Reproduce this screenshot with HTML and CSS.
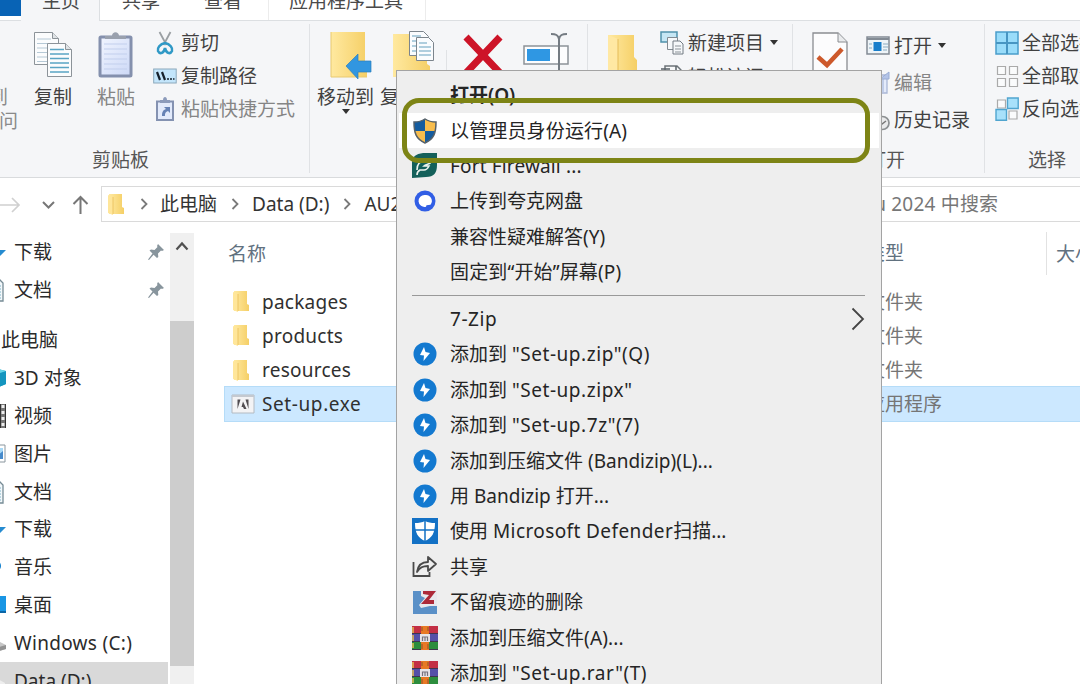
FILE: index.html
```html
<!DOCTYPE html>
<html lang="zh-CN">
<head>
<meta charset="utf-8">
<title>文件资源管理器</title>
<link rel="stylesheet" href="styles.css">
</head>
<body>
<svg class="defs" width="0" height="0">
  <defs>
    <linearGradient id="fold" x1="0" x2="1"><stop offset="0" stop-color="#ffe9a0"/><stop offset="1" stop-color="#f5cf66"/></linearGradient>
    <linearGradient id="clip" x1="0" x2="1" y2="1"><stop offset="0" stop-color="#f1f5ff"/><stop offset="1" stop-color="#ccd8f6"/></linearGradient>
    <symbol id="folder" viewBox="0 0 16 21"><path d="M1 0h13v13l2 1v6H1z" fill="url(#fold)"/><path d="M0 1l5 2v18l-5-2z" fill="#ffe69a"/><path d="M5 3v17" stroke="#e8bd56" stroke-width=".8"/></symbol>
    <symbol id="bandi" viewBox="0 0 24 24"><circle cx="12" cy="12" r="11.5" fill="#1379d0"/><path d="M11 5l-4 8 4 .5-.5 5.500 6.500-8-4.500-1z" fill="#fff"/></symbol>
    <symbol id="rar" viewBox="0 0 26 24"><path d="M0 0h26v8H0z" fill="#c32f45"/><path d="M0 8h26v8H0z" fill="#5550a8"/><path d="M0 16h26v8H0z" fill="#2c8d3d"/><path d="M0 7.5h26M0 15.5h26M0 23.5h26" stroke="#40354d" stroke-width="1"/><path d="M1 1v6M1 9v6M1 17v5" stroke="#e8bd51" stroke-width="1.5"/><path d="M9 0h8v24H9z" fill="#e87924"/><path d="M10 1v4m6-4v4m-6 13v5m6-5v5" stroke="#8b532b" stroke-width="1"/><path d="M8 8h10v8H8z" fill="#e7e4e8"/><path d="M10.500 15v-4h5v4M13 11v4" fill="none" stroke="#77727c" stroke-width="1.200"/></symbol>
    <symbol id="pin" viewBox="0 0 16 16"><path d="M10 0l6 6-2 1-1-.5-3 3 .3 3.5L9 14 5.600 10.800 1 16l-1-.5L4.500 9.500 1.500 6.500 3 5.500l3.500.5 3-3L9 2z" fill="#88959d"/></symbol>
    <symbol id="chev" viewBox="0 0 8 12"><path d="M1.500 1l5 5-5 5" fill="none" stroke="#7a7a7a" stroke-width="1.8"/></symbol>
    <symbol id="doc" viewBox="0 0 24 24"><path d="M1 1h18l4 4v18H1z" fill="#f3f8fb" stroke="#768b95" stroke-width="1.3"/><path d="M5 8h16M5 11h16M5 14h16M5 17h16M5 20h16" stroke="#7fb4c8"/></symbol>
    <symbol id="down" viewBox="0 0 24 24"><path d="M8 1h9v9h7L12 22 0 10h8z" fill="#268bd0"/></symbol>
  </defs>
</svg>
<div class="explorer">
  <nav class="tabs">
    <span class="tab file"></span>
    <span class="tab active">主页</span>
    <span class="tab share">共享</span>
    <span class="tab view">查看</span>
    <span class="tab tools">应用程序工具</span>
  </nav>

  <section class="ribbon">
    <div class="group clipboard">
      <div class="controls">
        <div class="pin-label"><span>到</span><span>问</span></div>
        <div class="big copy">
          <svg width="40" height="48" viewBox="0 0 40 48"><g fill="#fbfcfd" stroke="#8c9399"><path d="M1.500 1.500h18l6 6v26h-24z"/><path d="M19.500 1.500v6h6" fill="#dfe3e6"/></g><path d="M4 8h14M4 12.500h18M4 17h12M4 21.500h10M4 26h10M4 30.500h10" stroke="#b6c9d6"/><g fill="#fbfcfd" stroke="#8c9399"><path d="M14.500 12.500h18l6 6v27h-24z"/><path d="M32.500 12.500v6h6" fill="#dfe3e6"/></g><path d="M17 18.500h14M17 23h19M17 27.500h19M17 32h19M17 36.500h19M17 41h19" stroke="#5aa4c4" stroke-width="1.4"/></svg>
          <span>复制</span>
        </div>
        <div class="big paste">
          <svg width="36" height="48" viewBox="0 0 36 48"><rect x="2" y="6" width="31" height="39" rx="1" fill="url(#clip)" stroke="#8490ad" stroke-width="3"/><path d="M6 13h23M6 18h23M6 23h23M6 28h23M6 33h23M6 38h23" stroke="#c2cfed"/><path d="M7 8V5h7c0-5 7-5 7 0h7v3z" fill="#9aa1ae"/></svg>
          <span>粘贴</span>
        </div>
        <div class="stack">
          <div class="cmd"><svg width="24" height="26" viewBox="0 0 24 26"><path d="M6.500 2l7 13M17.500 2l-7 13" stroke="#9a9fa3" stroke-width="1.800"/><path d="M12 13c-5 1-8 5-7 8 2 4 6 2 7-3 1 5 5 7 7 3 1-3-2-7-7-8z" fill="none" stroke="#3099c6" stroke-width="2.600"/></svg><span>剪切</span></div>
          <div class="cmd"><svg width="24" height="16" viewBox="0 0 24 16"><rect x=".7" y="1" width="22.500" height="14" fill="#c3e5fb" stroke="#8ca8bb"/><path d="M4 4l3 8M9 4l3 8" stroke="#16212c" stroke-width="2.200"/><path d="M14 11h2m1 0h2m1 0h1.500" stroke="#16212c" stroke-width="1.600"/></svg><span>复制路径</span></div>
          <div class="cmd muted"><svg width="24" height="26" viewBox="0 0 24 26"><rect x="4" y="5.500" width="16" height="18.500" fill="#e2eafb" stroke="#8492b1" stroke-width="2"/><path d="M7 7V4h3c0-4 4-4 4 0h3v3z" fill="#8c9bbb"/><path d="M9 20c0-4 1-6 4-7l-2-2h6v6l-2-2c-3 1-3 3-3 5z" fill="#6682b5"/></svg><span>粘贴快捷方式</span></div>
        </div>
      </div>
      <div class="caption">剪贴板</div>
    </div>

    <div class="group organize">
      <div class="big move">
        <svg width="42" height="48" viewBox="0 0 42 48"><path d="M1 1h34v34l2 2v9H1z" fill="url(#fold)"/><path d="M1 1v45h36" fill="none" stroke="#e8c971"/><path d="M16 35l12-12v7h13v11H28v7z" fill="#3196e0" stroke="#2c80bb" stroke-width=".7"/></svg>
        <span>移动到</span><i class="caret"></i>
      </div>
      <div class="big copyto">
        <svg width="44" height="48" viewBox="0 0 44 48"><path d="M1 3h34v30l3 2v11H1z" fill="url(#fold)"/><g fill="#fafcfe" stroke="#7c858d"><path d="M17.500.5h14l5 5v19h-19z"/><path d="M24.500 6.500h12l5 5v18h-17z"/></g><path d="M20 5h9M20 10h4M20 15h4M20 20h4M27 12h8M27 16h12M27 20h12M27 24h12" stroke="#64a0be"/></svg>
        <span>复制到</span>
      </div>
      <i class="rule"></i>
      <svg class="delete" width="40" height="40" viewBox="0 0 40 40"><path d="M3 4l34 36M37 4L3 40" stroke="#cd1428" stroke-width="7"/></svg>
      <svg class="rename" width="48" height="40" viewBox="0 0 48 40"><rect x="1" y="13" width="44" height="18" fill="#fdfdfe" stroke="#8c9298" stroke-width="1.500"/><path d="M4 16h23v12H4z" fill="#2f97e3"/><path d="M28 1c5 0 7 1 8 5 1-4 3-5 8-5M36 5v35" fill="none" stroke="#747b82" stroke-width="2"/></svg>
    </div>

    <div class="group create">
      <svg class="newfolder" width="30" height="42" viewBox="0 0 30 42"><path d="M0 1h26v22l3 3v16H0z" fill="url(#fold)"/><path d="M0 1l10 4v37H0z" fill="#ffe8a3"/><path d="M10 5v37" stroke="#e5bc59"/></svg>
      <div class="stack">
        <div class="cmd"><svg width="24" height="25" viewBox="0 0 24 25"><path d="M1 2h16v10H1z" fill="#c5e6f4" stroke="#4f91aa" stroke-width="1.500"/><path d="M7.500 7.500h10v12h-10z" fill="#f6f8fa" stroke="#828a91"/><path d="M13 11h7l3 3v10H13z" fill="#f6f8fa" stroke="#737b82"/><path d="M15 16h6m-6 3h6m-6 3h6" stroke="#8b9298"/></svg><span>新建项目</span><i class="caret"></i></div>
        <div class="cmd second"><svg width="24" height="25" viewBox="0 0 24 25"><path d="M5 2h12l4 4v15H5z" fill="#f7f8f9" stroke="#6c7378" stroke-width="1.500"/><path d="M1 5h9M16 2v5h5" fill="none" stroke="#596168" stroke-width="1.500"/></svg><span>轻松访问</span></div>
      </div>
    </div>

    <div class="group open">
      <div class="controls">
        <svg class="properties" width="36" height="46" viewBox="0 0 36 46"><path d="M1 1h25l9 9v35H1z" fill="#fcfcfd" stroke="#8a8d91" stroke-width="1.300"/><path d="M26 1v9h9" fill="#e9ebed" stroke="#8a8d91"/><path d="M6 25l9 8 15-16" fill="none" stroke="#cd592b" stroke-width="4.500"/></svg>
        <div class="stack">
          <div class="cmd"><svg width="24" height="20" viewBox="0 0 24 20"><path d="M1 1h22v17H1z" fill="#eef4f8" stroke="#838b94" stroke-width="1.500"/><path d="M1 3h22" stroke="#838b94" stroke-width="2"/><path d="M7.500 6h8v9h-8z" fill="#187ecb"/><path d="M3 8h3m-3 4h3m11-4h5m-5 3h5m-5 3h4" stroke="#8aabc0"/></svg><span>打开</span><i class="caret"></i></div>
          <div class="cmd muted"><svg width="24" height="25" viewBox="0 0 24 25"><path d="M2 5h19v18H2z" fill="#e4ebfb" stroke="#a9b7d6" stroke-width="1.300"/><path d="M17 9v13m-3-13l9-7v7z" fill="#b3c4e8" stroke="#9aadd4"/></svg><span>编辑</span></div>
          <div class="cmd"><svg width="26" height="25" viewBox="0 0 26 25"><circle cx="17.500" cy="16" r="6.500" fill="#e9eaeb" stroke="#8c9092" stroke-width="1.700"/><path d="M14 14l3 3 4-3" fill="none" stroke="#777" stroke-width="1.500"/></svg><span>历史记录</span></div>
        </div>
      </div>
      <div class="caption">打开</div>
    </div>

    <div class="group select">
      <div class="stack">
        <div class="cmd"><svg width="24" height="24" viewBox="0 0 24 24"><path d="M1 1h22v22H1z" fill="#99dcfa" stroke="#4a9dca" stroke-width="1.500"/><path d="M12 1v22M1 12h22" stroke="#4795c2" stroke-width="2"/></svg><span>全部选择</span></div>
        <div class="cmd"><svg width="24" height="24" viewBox="0 0 24 24"><path d="M2.500 2.500h8v8h-8zM14.500 2.500h8v8h-8zM2.500 14.500h8v8h-8zM14.500 14.500h8v8h-8z" fill="#fafbfc" stroke="#aaa" stroke-width="1.200"/></svg><span>全部取消</span></div>
        <div class="cmd"><svg width="24" height="24" viewBox="0 0 24 24"><path d="M2.500 3h8v8h-8zM14 14h8v8h-8z" fill="#fafbfc" stroke="#aaa" stroke-width="1.200"/><path d="M12.500 1h10.700v10.500H12.500zM1 12.500h10.500v10.700H1z" fill="#a8e1fb" stroke="#50a5cf" stroke-width="1.400"/></svg><span>反向选择</span></div>
      </div>
      <div class="caption">选择</div>
    </div>
  </section>

  <section class="address">
    <svg class="history-nav" width="101" height="36" viewBox="0 0 101 36"><g fill="none"><path d="M0 19h18M12 12l7 7-7 7" stroke="#d0d0d0" stroke-width="1.700"/><path d="M43 16l5.500 5.500L54 16" stroke="#777" stroke-width="2"/><path d="M80.500 28V11M73.500 18l7-7 7 7" stroke="#777" stroke-width="2"/></g></svg>
    <div class="path">
      <svg width="16" height="21"><use href="#folder"/></svg>
      <svg class="sep" width="8" height="12"><use href="#chev"/></svg><span>此电脑</span>
      <svg class="sep" width="8" height="12"><use href="#chev"/></svg><span>Data (D:)</span>
      <svg class="sep" width="8" height="12"><use href="#chev"/></svg><span>AU2024</span>
    </div>
    <div class="search">Au 2024 中搜索</div>
  </section>

  <main class="body">
    <aside class="tree">
      <div class="node"><svg class="ico" width="24" height="24"><use href="#down"/></svg><span>下载</span><svg class="pin" width="16" height="16"><use href="#pin"/></svg></div>
      <div class="node"><svg class="ico short" width="24" height="24"><use href="#doc"/></svg><span>文档</span><svg class="pin" width="16" height="16"><use href="#pin"/></svg></div>
      <div class="node root"><span>此电脑</span></div>
      <div class="node"><svg class="ico" width="24" height="24" viewBox="0 0 24 24"><path d="M12 2l12 3v13l-12 5L0 18V5z" fill="#16a0c5"/><path d="M12 9l12-4v13l-12 5z" fill="#1595bf"/><path d="M12 2l12 3-12 4L0 5z" fill="#66d4e8"/></svg><span>3D 对象</span></div>
      <div class="node"><svg class="ico" width="24" height="24" viewBox="0 0 24 24"><path d="M0 0h24v24H0z" fill="#777"/><path d="M5 1h13v22H5z" fill="#b39a69"/><path d="M21 1v22" stroke="#eee" stroke-width="3" stroke-dasharray="3 3"/><path d="M18.500 0v24M23.500 0v24" stroke="#333"/></svg><span>视频</span></div>
      <div class="node"><svg class="ico" width="24" height="20" viewBox="0 0 24 20"><path d="M1 1h22v17H1z" fill="#fff" stroke="#8a969e"/><path d="M4 4h17v11H4z" fill="#a7d8f6"/><path d="M4 15l7-7 4 4 6-5v8z" fill="#468acb"/></svg><span>图片</span></div>
      <div class="node"><svg class="ico short" width="24" height="24"><use href="#doc"/></svg><span>文档</span></div>
      <div class="node"><svg class="ico" width="24" height="24"><use href="#down"/></svg><span>下载</span></div>
      <div class="node"><svg class="ico" width="24" height="24" viewBox="0 0 24 24"><path d="M13 1c1 5 6 5 6 10 0 3-2 4-3 5 1-5-1-7-3-7z" fill="#1582cf"/><circle cx="9" cy="18" r="4" fill="#1582cf"/></svg><span>音乐</span></div>
      <div class="node"><svg class="ico" width="24" height="20" viewBox="0 0 24 20"><path d="M0 1h24v17H0z" fill="#1996e4"/><path d="M0 16h24v2H0z" fill="#0b66a6"/></svg><span>桌面</span></div>
      <div class="node"><svg class="ico" width="24" height="24" viewBox="0 0 24 24"><path d="M0 12l16-2 8 4v4l-10 3H0z" fill="#c6c6c6"/><path d="M14 17l10-3v4l-10 3z" fill="#929292"/></svg><span class="drive">Windows (C:)</span></div>
      <div class="node current"><svg class="ico" width="24" height="24" viewBox="0 0 24 24"><path d="M0 12l16-2 7 4v4l-9 3H0z" fill="#eee"/></svg><span>Data (D:)</span></div>
    </aside>
    <div class="scroll">
      <svg width="24" height="26" viewBox="0 0 24 26"><path d="M6.500 16.500l5.500-6 5.500 6" fill="none" stroke="#505050" stroke-width="2.200"/></svg>
      <div class="thumb"></div>
    </div>
    <section class="files">
      <div class="head"><span class="name">名称</span><span class="type">类型</span><span class="size">大小</span></div>
      <div class="row"><svg width="16" height="21"><use href="#folder"/></svg><span class="name">packages</span><span class="type">文件夹</span></div>
      <div class="row"><svg width="16" height="21"><use href="#folder"/></svg><span class="name">products</span><span class="type">文件夹</span></div>
      <div class="row"><svg width="16" height="21"><use href="#folder"/></svg><span class="name">resources</span><span class="type">文件夹</span></div>
      <div class="row selected"><svg class="exe" width="24" height="20" viewBox="0 0 24 20"><path d="M1 1h22v18H1z" fill="#f3f3f5" stroke="#b3bac2"/><path d="M1 2h22" stroke="#c4c9d0" stroke-width="2"/><path d="M6.500 15V5.500h3zM17.500 15V5.500h-3zM12 7.500l3.500 7.500H13l-1-2h-1.500z" fill="#504c50"/></svg><span class="name">Set-up.exe</span><span class="type">应用程序</span></div>
    </section>
  </main>

  <div class="menu">
    <div class="item default"><span class="icon"></span><span>打开(O)</span></div>
    <div class="item hover"><span class="icon"><svg width="24" height="26" viewBox="0 0 24 26"><path d="M12 1c3 2 7 3 11 3 0 11-2 17-11 21C3 21 1 15 1 4c4 0 8-1 11-3z" fill="#155c9f"/><path d="M12 1c3 2 7 3 11 3l-.4 9H12zM12 13v12C5 22 2 18 1.400 13z" fill="#f8bd4d"/><path d="M12 1c3 2 7 3 11 3 0 11-2 17-11 21C3 21 1 15 1 4c4 0 8-1 11-3z" fill="none" stroke="#56616a" stroke-width="1.500"/></svg></span><span class="wide">以管理员身份运行(A)</span></div>
    <div class="item"><span class="icon"><svg width="25" height="25" viewBox="0 0 25 25"><path d="M0 25V9C1 2 6 0 14 0h11v12c0 8-3 12-11 12z" fill="#14605a"/><path d="M5 22c0-2 1-4 3-5h4c3 0 4-2 5-4h-5c2-2 6-1 8-5h-7c-5 0-8 3-8 9" fill="none" stroke="#edf3ee" stroke-width="1.600"/></svg></span><span class="wide">Fort Firewall ...</span></div>
    <div class="item"><span class="icon"><svg width="22" height="22" viewBox="0 0 22 22"><circle cx="11" cy="11" r="10.500" fill="#315ee5"/><path d="M11 5a6 6 0 1 0 1 11.800l.5-1.600 4-.5A6 6 0 0 0 11 5z" fill="#fff"/></svg></span><span>上传到夸克网盘</span></div>
    <div class="item"><span class="icon"></span><span>兼容性疑难解答(Y)</span></div>
    <div class="item"><span class="icon"></span><span class="wide">固定到“开始”屏幕(P)</span></div>
    <div class="line"></div>
    <div class="item"><span class="icon"></span><span class="setup">7-Zip</span><svg class="submenu" width="14" height="24" viewBox="0 0 14 24"><path d="M1.500 1.500L12 12 1.500 22.500" fill="none" stroke="#444" stroke-width="1.800"/></svg></div>
    <div class="item"><span class="icon"><svg width="24" height="24"><use href="#bandi"/></svg></span><span>添加到 <span class="setup">"Set-up.zip"(Q)</span></span></div>
    <div class="item"><span class="icon"><svg width="24" height="24"><use href="#bandi"/></svg></span><span>添加到 <span class="setup">"Set-up.zipx"</span></span></div>
    <div class="item"><span class="icon"><svg width="24" height="24"><use href="#bandi"/></svg></span><span>添加到 <span class="setup">"Set-up.7z"(7)</span></span></div>
    <div class="item"><span class="icon"><svg width="24" height="24"><use href="#bandi"/></svg></span><span>添加到压缩文件 (Bandizip)(L)...</span></div>
    <div class="item"><span class="icon"><svg width="24" height="24"><use href="#bandi"/></svg></span><span>用 Bandizip 打开...</span></div>
    <div class="item"><span class="icon"><svg width="26" height="26" viewBox="0 0 26 26"><path d="M0 0h26v26H0z" fill="#1371c5"/><path d="M13 3c3 1.500 6 2 10 2 0 10-3 15-10 18C6 20 3 15 3 5c4 0 7-.5 10-2z" fill="#fff"/><path d="M13 3v20M3 12h20" stroke="#1371c5" stroke-width="1.500"/></svg></span><span>使用 <span class="defender">Microsoft Defender</span>扫描...</span></div>
    <div class="item"><span class="icon"><svg width="26" height="24" viewBox="0 0 26 24"><path d="M1.500 7v14h16v-4" fill="none" stroke="#4a4a4a" stroke-width="1.800"/><path d="M5 17c1-7 5-10 11-10V2l8 7-8 7v-5c-5 0-8 1-11 6z" fill="none" stroke="#4a4a4a" stroke-width="1.800" stroke-linejoin="round"/></svg></span><span>共享</span></div>
    <div class="item"><span class="icon"><svg width="24" height="24" viewBox="0 0 24 24"><path d="M0 1h24v23H0z" fill="#5a90c7"/><path d="M8 0h16v16h-7L8 18l-2-3 6-7-4-2z" fill="#e8e8ed"/><path d="M10 1h13l-7 9h5v4H8l8-9-6-1z" fill="#ad2939"/></svg></span><span>不留痕迹的删除</span></div>
    <div class="item"><span class="icon"><svg width="26" height="24"><use href="#rar"/></svg></span><span class="wide">添加到压缩文件(A)...</span></div>
    <div class="item"><span class="icon"><svg width="26" height="24"><use href="#rar"/></svg></span><span>添加到 <span class="setup">"Set-up.rar"(T)</span></span></div>
  </div>
  <div class="callout"></div>
</div>
</body>
</html>
```
FILE: styles.css
```css
* { box-sizing: border-box; }
body { margin: 0; }
svg { display: block; flex: none; }
.defs { position: absolute; }

.explorer {
  position: relative;
  width: 1080px;
  height: 684px;
  overflow: hidden;
  background: #fff;
  color: #303030;
  font: 19px/24px "Noto Sans", "Noto Sans CJK SC", sans-serif;
  white-space: nowrap;
}

/* Tabs */
.tabs { display: flex; height: 21px; border-bottom: 1px solid #dcdfe2; }
.tab { height: 32px; margin-top: -12px; line-height: 26px; color: #4a4a4a; }
.file { width: 21px; height: 28px; background: #0863b5; }
.active { width: 79px; height: 33px; padding-left: 21px; background: #f5f6f8; border-right: 1px solid #dcdfe2; }
.share { padding-left: 22px; width: 104px; }
.view { width: 65px; border-right: 1px solid #ececec; }
.tools { width: 157px; padding-left: 20px; border-right: 1px solid #ececec; }

/* Ribbon */
.ribbon { display: flex; height: 157px; background: #f5f6f8; border-bottom: 1px solid #d9dbdd; padding: 3px 0 4px; color: #414141; }
.group { flex: none; border-right: 1px solid #e0e2e5; }
.clipboard { width: 310px; }
.organize { display: flex; width: 278px; }
.create { display: flex; width: 205px; padding-left: 20px; }
.open { width: 192px; }
.select { width: 95px; border: 0; padding-left: 10px; }
.controls { display: flex; height: 124px; }
.caption { color: #555; height: 24px; }
.clipboard .caption { padding-left: 92px; }
.open .caption { padding-left: 74px; }
.select .caption { padding-left: 33px; }
.pin-label { display: flex; flex-direction: column; align-items: flex-end; width: 18px; padding-top: 61px; margin-right: 16px; color: #8a8a8a; }
.pin-label span:first-child { margin-right: 10px; }
.big { display: flex; flex-direction: column; align-items: center; padding-top: 7px; }
.big span { margin-top: 6px; }
.caret { width: 0; height: 0; border: 4px solid transparent; border-top: 5px solid #333; border-bottom: 0; }
.copy { width: 38px; }
.paste { width: 38px; margin-left: 25px; color: #858585; }
.move { width: 57px; margin-left: 7px; }
.move svg { margin-left: 11px; }
.copyto { width: 57px; margin-left: 6px; }
.copyto svg { margin-left: 10px; }
.rule { width: 1px; height: 48px; margin: 26px 16px 0 9px; background: #e0e2e5; }
.delete { margin-top: 9px; }
.rename { margin: 9px 0 0 20px; }
.newfolder { margin-top: 10px; }
.cmd { display: flex; align-items: center; height: 33px; gap: 4px; }
.muted { color: #858585; }
.cmd .caret { margin-left: 2px; }
.clipboard .stack { padding-top: 2px; margin-left: 18px; }
.create .stack { padding-top: 2px; margin-left: 22px; }
.second { padding-top: 2px; }
.properties { margin: 8px 18px 0 19px; }
.open .stack { padding-top: 3px; }
.open .cmd { height: 37px; }
.open .cmd svg { width: 26px; margin-left: -1px; margin-right: -2px; }
.open .cmd span { margin-left: 1px; }
.select .stack { height: 124px; padding-top: 2px; }
.select .cmd { gap: 3px; }

/* Address bar */
.address { display: flex; height: 54px; padding-top: 8px; }
.path { display: flex; align-items: center; width: 720px; height: 36px; border: 1px solid #dadada; padding-left: 6px; color: #333; }
.path .sep { margin-left: 14px; margin-right: 13px; }
.path > svg:first-child + .sep { margin-left: 16px; margin-right: 12px; }
.search { width: 260px; height: 36px; line-height: 35px; border: 1px solid #dadada; border-right: 0; color: #777; margin-left: 11px; padding-left: 38px; letter-spacing: .2px; }

/* Folder tree */
.body { display: flex; height: 452px; }
.tree { flex: none; width: 168px; height: 452px; padding-top: 1.500px; color: #2b2b2b; }
.node { display: flex; align-items: center; height: 37.8px; gap: 8px; }
.ico { margin-left: -18px; }
.ico.short { margin-left: -20px; margin-right: 2px; }
.root { margin-top: 12.500px; padding-left: 1px; }
.pin { margin-left: auto; margin-right: 4px; }
.drive { letter-spacing: .3px; }
.current { background: #d9d9d9; }
.scroll { flex: none; width: 24px; height: 452px; margin: 1px 0 0 2px; background: #f0f0f0; }
.thumb { height: 345px; margin-top: 62px; background: #cdcdcd; }

/* File list */
.files { flex: none; width: 856px; margin-left: 30px; }
.files span { flex: none; }
.head { display: flex; align-items: center; height: 43px; margin-bottom: 9.500px; color: #61717f; }
.head .name { width: 642px; padding-left: 4px; }
.head .type { width: 181px; height: 43px; line-height: 43px; border-right: 1px solid #e2e2e2; }
.head .size { padding-left: 9px; }
.row { display: flex; align-items: center; height: 34.300px; padding-left: 9px; }
.row .name { width: 617px; padding-left: 13px; letter-spacing: .25px; }
.row .type { color: #757575; }
.row.selected { background: #cce8ff; border: 1px solid #b5dcf8; border-right: 0; height: 36px; padding-left: 6px; margin-top: -1px; }
.row.selected .name { padding-left: 7px; width: 611px; letter-spacing: .6px; }

/* Context menu */
.menu {
  position: absolute;
  left: 396px;
  top: 70px;
  width: 486px;
  height: 640px;
  padding: 6.500px 2px;
  background: #eee;
  border: 1px solid #a3a3a3;
  color: #252525;
}
.item { display: flex; align-items: center; height: 35.400px; }
.icon { display: flex; align-items: center; justify-content: center; width: 51px; flex: none; }
.default { font-weight: 600; }
.hover { background: #fff; }
.wide { letter-spacing: .15px; }
.setup { letter-spacing: .55px; }
.defender { letter-spacing: .4px; }
.line { height: 1px; margin: 5px 14px 5.500px 13px; background: #999; }
.submenu { margin-left: auto; margin-right: 14px; }
.callout {
  position: absolute;
  left: 402px;
  top: 98px;
  width: 468px;
  height: 65px;
  border: 5px solid #7d8415;
  border-radius: 17px;
}
```
